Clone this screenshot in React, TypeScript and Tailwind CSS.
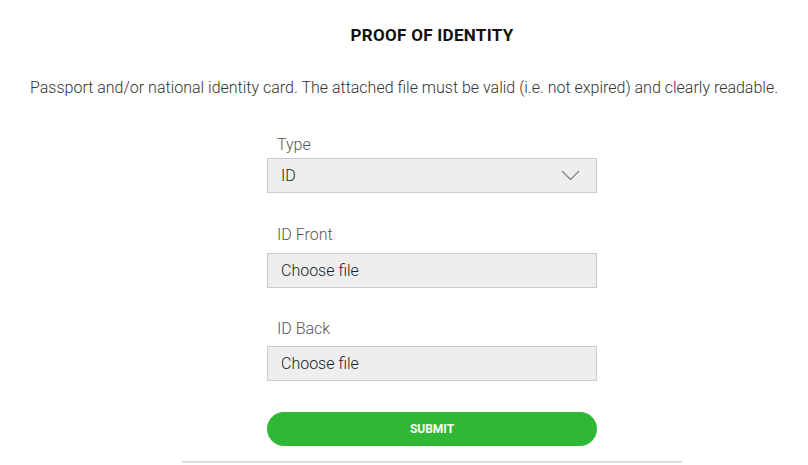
export default function App() {
  return (
    <div className="w-[808px] h-[465px] bg-white overflow-hidden font-['Roboto',sans-serif]">
      <div className="ml-[56px] w-[752px]">
        <h2 className="pt-[25px] text-center text-[17px] leading-[20px] font-bold tracking-[0.3px] text-[#111]">
          PROOF OF IDENTITY
        </h2>
      </div>

      <p className="mt-[33px] text-center text-[16px] leading-[20px] font-light text-[#333]">
        Passport and/or national identity card. The attached file must be valid (i.e. not expired) and clearly readable.
      </p>

      <div className="ml-[56px] w-[752px]">
        <form className="w-[330px] mx-auto mt-[37px]">
          {/* Type */}
          <div>
            <label className="block px-[10px] text-[16px] leading-[20px] font-light text-[#555]">Type</label>
            <div className="mt-[3px] h-[35px] flex items-center justify-between px-[13px] bg-[#eee] border border-[#ccc] text-[16px] font-light text-[#222]">
              <span>ID</span>
              <svg width="19" height="11" viewBox="0 0 19 11" fill="none" className="mr-[3px]">
                <path d="M1 1l8.5 8.5L18 1" stroke="#888" strokeWidth="1.4" />
              </svg>
            </div>
          </div>

          {/* ID Front */}
          <div className="mt-[32px]">
            <label className="block px-[10px] text-[16px] leading-[20px] font-light text-[#555]">ID Front</label>
            <div className="mt-[8px] h-[35px] flex items-center px-[13px] bg-[#eee] border border-[#ccc] text-[16px] font-light text-[#222]">
              Choose file
            </div>
          </div>

          {/* ID Back */}
          <div className="mt-[31px]">
            <label className="block px-[10px] text-[16px] leading-[20px] font-light text-[#555]">ID Back</label>
            <div className="mt-[7px] h-[35px] flex items-center px-[13px] bg-[#eee] border border-[#ccc] text-[16px] font-light text-[#222]">
              Choose file
            </div>
          </div>

          <button
            type="button"
            className="mt-[31px] w-full h-[34px] rounded-full bg-[#2eb836] text-white text-[12px] font-bold"
          >
            SUBMIT
          </button>
        </form>

        <div className="w-[500px] mx-auto mt-[15px] h-[2px] bg-[#ddd]" />
      </div>
    </div>
  );
}
